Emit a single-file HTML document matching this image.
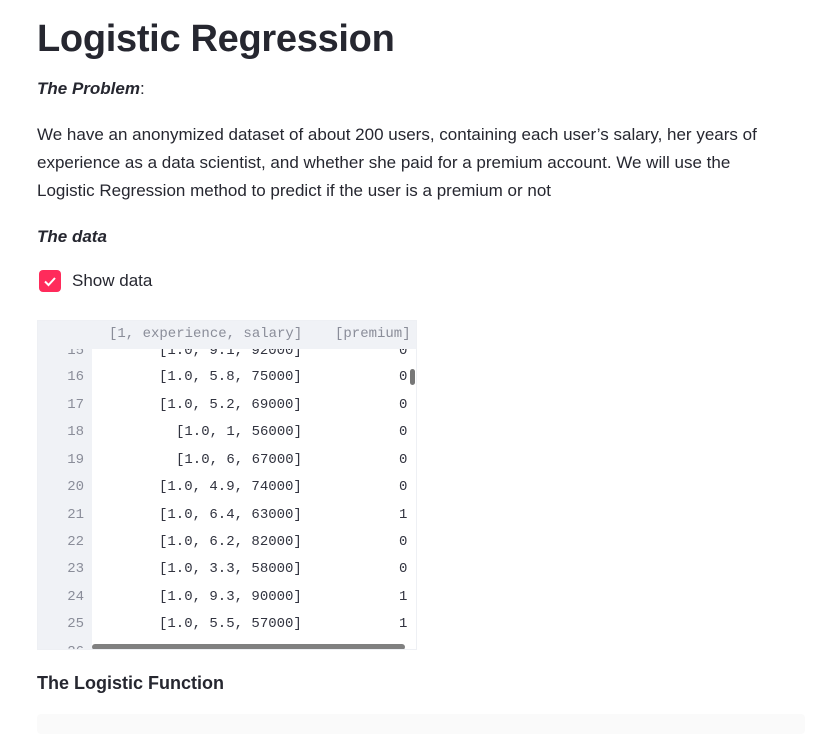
<!DOCTYPE html>
<html><head><meta charset="utf-8"><style>
body{margin:0;background:#fff;color:#262730;font-family:"Liberation Sans",sans-serif;width:823px;height:722px;overflow:hidden;position:relative}
.a{position:absolute;white-space:nowrap}
h1{position:absolute;left:37px;top:18px;margin:0;font-size:38px;font-weight:bold;color:#262730;letter-spacing:-0.3px}
.p{font-size:17px;left:37px}
.tbl{position:absolute;left:37px;top:320px;width:380px;height:330px;border:1px solid #eef0f4;box-sizing:border-box;overflow:hidden;font-family:"Liberation Mono",monospace;font-size:14px}
.idx{position:absolute;left:0;top:0;width:54px;height:100%;background:#f0f2f6}
.hdr{position:absolute;left:0;top:0;width:100%;height:28px;background:#f0f2f6}
.r{position:absolute;height:27px;line-height:27px;color:#31333f}
.n{color:#8a8d99;left:0;width:46px;text-align:right}
</style></head><body>
<h1>Logistic Regression</h1>
<div class="a p" style="top:79px;font-weight:bold;font-style:italic">The Problem<span style="font-weight:normal;font-style:normal">:</span></div>
<div class="a p" style="top:125px">We have an anonymized dataset of about 200 users, containing each user’s salary, her years of</div>
<div class="a p" style="top:153px">experience as a data scientist, and whether she paid for a premium account. We will use the</div>
<div class="a p" style="top:181px">Logistic Regression method to predict if the user is a premium or not</div>
<div class="a p" style="top:227px;font-weight:bold;font-style:italic">The data</div>
<div class="a" style="left:39px;top:270px;width:22px;height:22px;background:#ff2b5b;border-radius:4px">
<svg width="22" height="22"><path d="M6 11.5l3.5 3.5 6.5-7" stroke="#fff" stroke-width="2" fill="none"/></svg></div>
<div class="a p" style="left:72px;top:271px">Show data</div>
<div class="tbl">
<div class="idx"></div>
<div class="r n" style="top:17px">15</div><div class="r" style="top:17px;left:121px">[1.0, 9.1, 92000]</div><div class="r" style="top:17px;left:361px">0</div>
<div class="r n" style="top:43px">16</div><div class="r" style="top:43px;left:121px">[1.0, 5.8, 75000]</div><div class="r" style="top:43px;left:361px">0</div>
<div class="r n" style="top:71px">17</div><div class="r" style="top:71px;left:121px">[1.0, 5.2, 69000]</div><div class="r" style="top:71px;left:361px">0</div>
<div class="r n" style="top:98px">18</div><div class="r" style="top:98px;left:138px">[1.0, 1, 56000]</div><div class="r" style="top:98px;left:361px">0</div>
<div class="r n" style="top:126px">19</div><div class="r" style="top:126px;left:138px">[1.0, 6, 67000]</div><div class="r" style="top:126px;left:361px">0</div>
<div class="r n" style="top:153px">20</div><div class="r" style="top:153px;left:121px">[1.0, 4.9, 74000]</div><div class="r" style="top:153px;left:361px">0</div>
<div class="r n" style="top:181px">21</div><div class="r" style="top:181px;left:121px">[1.0, 6.4, 63000]</div><div class="r" style="top:181px;left:361px">1</div>
<div class="r n" style="top:208px">22</div><div class="r" style="top:208px;left:121px">[1.0, 6.2, 82000]</div><div class="r" style="top:208px;left:361px">0</div>
<div class="r n" style="top:235px">23</div><div class="r" style="top:235px;left:121px">[1.0, 3.3, 58000]</div><div class="r" style="top:235px;left:361px">0</div>
<div class="r n" style="top:263px">24</div><div class="r" style="top:263px;left:121px">[1.0, 9.3, 90000]</div><div class="r" style="top:263px;left:361px">1</div>
<div class="r n" style="top:290px">25</div><div class="r" style="top:290px;left:121px">[1.0, 5.5, 57000]</div><div class="r" style="top:290px;left:361px">1</div>
<div class="r n" style="top:318px">26</div>
<div class="hdr"></div>
<div class="r" style="top:0;left:71px;color:#8a8d99">[1, experience, salary]</div>
<div class="r" style="top:0;left:297px;color:#8a8d99">[premium]</div>
<div class="a" style="left:372px;top:48px;width:5px;height:16px;background:#777;border-radius:3px"></div>
<div class="a" style="left:54px;top:323px;width:313px;height:6px;background:#808080;border-radius:3px"></div>
</div>
<div class="a" style="left:37px;top:673px;font-size:18px;font-weight:bold">The Logistic Function</div>
<div class="a" style="left:37px;top:714px;width:768px;height:20px;background:#fafafa;border-radius:4px"></div>
</body></html>
